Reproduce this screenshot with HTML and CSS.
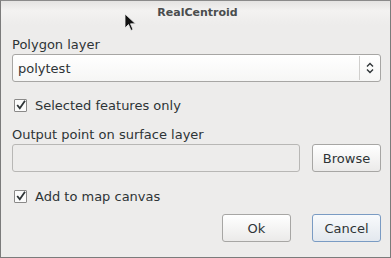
FILE: index.html
```html
<!DOCTYPE html>
<html>

<head>
    <meta charset="UTF-8">
    <title>RealCentroid</title>
    <link rel="stylesheet" href="styles.css">
</head>

<body>
    <div class="window">
        <div class="titleBar">RealCentroid</div>
        <div class="content">
            <div class="fieldRow">
                <label for="layer">Polygon layer</label>
                <div class="combo" id="layer">
                    <span class="comboText">polytest</span>
                    <span class="comboArrow">
                        <svg width="8" height="12" viewBox="0 0 8 12">
                            <path d="M1 4.5 L4 1.5 L7 4.5 M1 7.5 L4 10.5 L7 7.5" fill="none" stroke="#2e3436" stroke-width="1.4"/>
                        </svg>
                    </span>
                </div>
            </div>
            <div class="checkRow">
                <span class="checkBox">
                    <svg width="10" height="10" viewBox="0 0 10 10">
                        <path d="M1.2 5 L3.8 8.2 L9 0.8" fill="none" stroke="#2e3436" stroke-width="1.8"/>
                    </svg>
                </span>
                <span>Selected features only</span>
            </div>
            <div class="fieldRow">
                <label for="output">Output point on surface layer</label>
                <div class="inputLine">
                    <input id="output" type="text" disabled>
                    <button>Browse</button>
                </div>
            </div>
            <div class="checkRow lastCheck">
                <span class="checkBox">
                    <svg width="10" height="10" viewBox="0 0 10 10">
                        <path d="M1.2 5 L3.8 8.2 L9 0.8" fill="none" stroke="#2e3436" stroke-width="1.8"/>
                    </svg>
                </span>
                <span>Add to map canvas</span>
            </div>
            <div class="buttonRow">
                <button>Ok</button>
                <button class="default">Cancel</button>
            </div>
        </div>
        <svg class="pointer" width="14" height="20" viewBox="0 0 14 20">
            <path d="M1 1 L1 15 L4.5 11.5 L7 17.5 L9 16.5 L6.5 10.8 L11.5 10.8 Z" fill="#111" stroke="#eee" stroke-width="0.8"/>
        </svg>
    </div>
</body>

</html>
```

FILE: styles.css
```css
html {
    background: #edeceb;
    font-family: "DejaVu Sans", sans-serif;
    font-size: 13px;
    color: #2e3436;
}
body {
    margin: 0;
}
.window {
    position: relative;
    width: 391px;
    height: 258px;
    box-sizing: border-box;
    border: 1px solid #7b7b7b;
    border-top-color: #8a8a8a;
    background: #edeceb;
}
.titleBar {
    height: 24px;
    line-height: 24px;
    text-align: center;
    padding-left: 4px;
    font-size: 11px;
    font-weight: bold;
    color: #4a4d4e;
    background: linear-gradient(#e4e3e2, #f3f2f1 40%, #edeceb);
}
.content {
    padding: 12px 9px 0 11px;
}
.fieldRow > label {
    display: block;
    height: 16px;
    line-height: 16px;
    margin-bottom: 1px;
}
.combo {
    height: 28px;
    box-sizing: border-box;
    border: 1px solid #a7a6a4;
    border-radius: 3px;
    background: linear-gradient(#ffffff, #f6f6f5);
    display: flex;
    align-items: center;
}
.comboText {
    flex: 1;
    padding-left: 5px;
}
.comboArrow {
    width: 20px;
    height: 24px;
    border-left: 1px solid #d0cfcd;
    display: flex;
    align-items: center;
    justify-content: center;
}
.checkRow {
    display: flex;
    align-items: center;
    height: 16px;
    margin: 15px 0 14px 2px;
}
.checkRow.lastCheck {
    margin: 16px 0 10px 2px;
}
.checkBox {
    width: 11px;
    height: 11px;
    border: 1px solid #8a8988;
    border-radius: 1px;
    background: #fbfbfb;
    margin-right: 8px;
    display: flex;
    align-items: center;
    justify-content: center;
}
.inputLine {
    display: flex;
    gap: 12px;
}
.inputLine > input {
    flex: 1;
    height: 28px;
    box-sizing: border-box;
    border: 1px solid #b8b7b5;
    border-radius: 3px;
    background: #edeceb;
    outline: none;
    margin: 0;
}
button {
    width: 69px;
    height: 28px;
    box-sizing: border-box;
    border: 1px solid #a7a6a4;
    border-radius: 3px;
    background: linear-gradient(#ffffff, #ebeae9);
    font-family: "DejaVu Sans", sans-serif;
    font-size: 13px;
    color: #2e3436;
    padding: 0;
}
.buttonRow {
    display: flex;
    justify-content: flex-end;
    gap: 21px;
}
button.default {
    border-color: #7a9bc3;
    background: linear-gradient(#f8fafc, #e3e8ee);
}
.pointer {
    position: absolute;
    left: 123px;
    top: 12px;
}
```
